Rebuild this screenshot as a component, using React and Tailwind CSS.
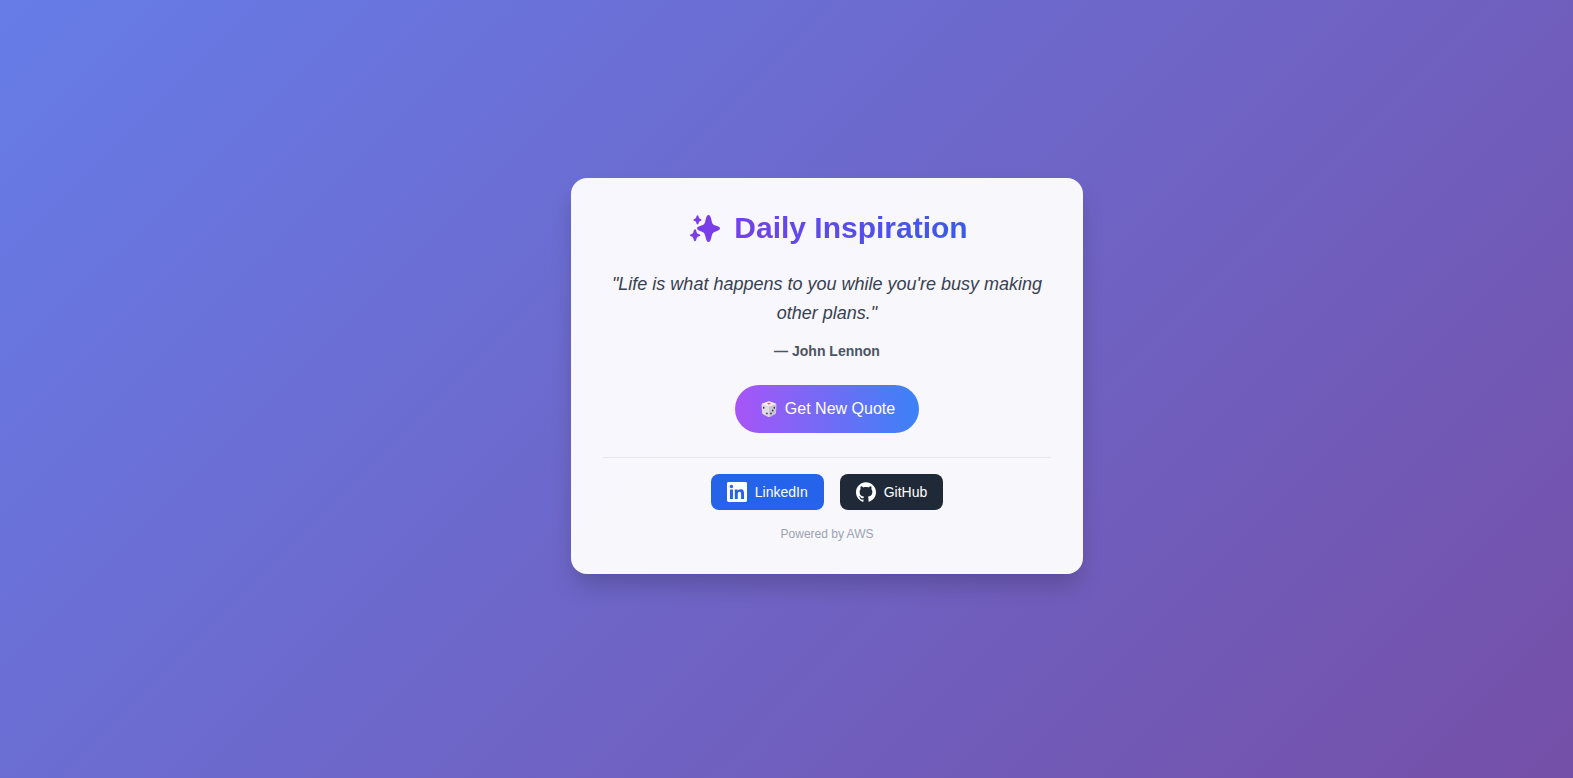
function SparklesIcon() {
  return (
    <svg viewBox="0 0 30 27" className="h-[27px] w-[30px] fill-[#7b3dea]" aria-hidden="true">
      <path d="M18.500 0C19.900 0 20.700 1.500 21.500 5.200c.8 3.600 1.300 4.300 4.200 5.400 2.900 1 4.300 1.600 4.300 2.900s-1.400 1.900-4.300 2.900c-2.900 1.100-3.400 1.800-4.200 5.400C20.700 25.500 19.900 27 18.500 27s-2.200-1.500-3-5.200c-.8-3.600-1.300-4.300-4.200-5.400C8.400 15.400 7 14.800 7 13.500s1.400-1.900 4.300-2.900c2.900-1.100 3.400-1.800 4.200-5.400C16.300 1.500 17.100 0 18.500 0Z" />
      <path d="M7.500.3c.7 0 1 .9 1.300 2 .3.900.5 1.200 1.300 1.500.8.300 1.300.5 1.300 1.100s-.5.800-1.300 1.100c-.8.300-1 .6-1.300 1.500-.3 1.100-.6 2-1.300 2s-1-.9-1.300-2c-.3-.9-.5-1.200-1.300-1.500-.8-.3-1.300-.5-1.300-1.100s.5-.8 1.300-1.100c.8-.3 1-.6 1.300-1.500.3-1.100.6-2 1.300-2Z" />
      <path d="M5 14.300c.9 0 1.200 1.200 1.600 2.700.4 1.200.7 1.600 1.800 2 1.100.4 1.900.6 1.900 1.300s-.8.900-1.900 1.300c-1.100.4-1.400.8-1.800 2-.4 1.500-.7 2.700-1.600 2.700s-1.200-1.200-1.600-2.700c-.4-1.200-.7-1.600-1.800-2C.8 21.200 0 21 0 20.300s.8-.9 1.600-1.300c1.100-.4 1.400-.8 1.800-2 .4-1.500.7-2.700 1.600-2.700Z" />
    </svg>
  );
}

function DiceIcon() {
  return (
    <svg viewBox="0 0 16 16" className="ml-0.5 size-4" aria-hidden="true">
      <path d="M7 .4a2.500 2.500 0 0 1 2 0l5.800 2.200c.4.200.5.600.2.900L8 6 1 3.500c-.3-.3-.2-.7.2-.9Z" fill="#f3eff3" />
      <path d="M.5 3.800c0-.5.300-.7.700-.6L8.100 5.700V16c-.4 0-.9-.1-1.300-.3L2 13.200c-.6-.3-.8-.6-.9-1.200Z" fill="#dedbe6" />
      <path d="M15.500 3.800c0-.5-.3-.7-.7-.6L8 5.700V16c.4 0 .9-.1 1.300-.3l4.800-2.500c.6-.3.800-.6.900-1.200Z" fill="#cac6d6" />
      <ellipse cx="8" cy="2.600" rx="1.700" ry=".9" fill="#e4636b" />
      <g fill="#33303f">
        <ellipse cx="2.700" cy="6.800" rx=".8" ry="1" />
        <ellipse cx="5.900" cy="12.600" rx=".8" ry="1" />
        <ellipse cx="13.300" cy="6.700" rx=".8" ry="1" />
        <ellipse cx="11.700" cy="9.600" rx=".8" ry="1" />
        <ellipse cx="10" cy="12.500" rx=".8" ry="1" />
      </g>
    </svg>
  );
}

function LinkedInIcon() {
  return (
    <svg viewBox="0 0 24 24" className="size-5 fill-current" aria-hidden="true">
      <path d="M20.447 20.452h-3.554v-5.569c0-1.328-.027-3.037-1.852-3.037-1.853 0-2.136 1.445-2.136 2.939v5.667H9.351V9h3.414v1.561h.046c.477-.9 1.637-1.850 3.370-1.850 3.601 0 4.267 2.370 4.267 5.455v6.286zM5.337 7.433c-1.144 0-2.063-.926-2.063-2.065 0-1.138.92-2.063 2.063-2.063 1.140 0 2.064.925 2.064 2.063 0 1.139-.925 2.065-2.064 2.065zm1.782 13.019H3.555V9h3.564v11.452zM22.225 0H1.771C.792 0 0 .774 0 1.729v20.542C0 23.227.792 24 1.771 24h20.451C23.200 24 24 23.227 24 22.271V1.729C24 .774 23.200 0 22.222 0h.003z" />
    </svg>
  );
}

function GitHubIcon() {
  return (
    <svg viewBox="0 0 24 24" className="size-5 fill-current" aria-hidden="true">
      <path d="M12 .297c-6.630 0-12 5.373-12 12 0 5.303 3.438 9.800 8.205 11.385.6.113.82-.258.82-.577 0-.285-.01-1.040-.015-2.040-3.338.724-4.042-1.610-4.042-1.610C4.422 18.070 3.633 17.700 3.633 17.700c-1.087-.744.084-.729.084-.729 1.205.084 1.838 1.236 1.838 1.236 1.070 1.835 2.809 1.305 3.495.998.108-.776.417-1.305.76-1.605-2.665-.3-5.466-1.332-5.466-5.930 0-1.310.465-2.380 1.235-3.220-.135-.303-.54-1.523.105-3.176 0 0 1.005-.322 3.300 1.230.96-.267 1.980-.399 3-.405 1.020.006 2.040.138 3 .405 2.280-1.552 3.285-1.230 3.285-1.230.645 1.653.24 2.873.12 3.176.765.840 1.230 1.910 1.230 3.220 0 4.610-2.805 5.625-5.475 5.920.42.360.81 1.096.81 2.220 0 1.606-.015 2.896-.015 3.286 0 .315.21.690.825.570C20.565 22.092 24 17.592 24 12.297c0-6.627-5.373-12-12-12" />
    </svg>
  );
}

export default function App() {
  return (
    <main className="flex min-h-screen items-center justify-center bg-[linear-gradient(135deg,#667eea_-4%,#764ba2_110%)] pb-[26px] pl-[81px] font-['Liberation_Sans',Arial,sans-serif]">
      <section className="w-full max-w-lg rounded-2xl bg-white/95 p-8 text-center shadow-[0_14px_25px_-4px_rgba(0,0,0,0.2)]">
        <h1 className="mb-6 flex items-center justify-center gap-3.5 bg-[linear-gradient(to_right,#9333ea,#2563eb)] bg-clip-text pl-1 text-3xl font-bold text-transparent">
          <SparklesIcon />
          Daily Inspiration
        </h1>

        <blockquote className="mb-[13px] text-lg leading-[29px] text-[#374151] italic">
          "Life is what happens to you while you're busy making other plans."
        </blockquote>
        <p className="mb-6 text-sm font-semibold text-[#4b5563]">— John Lennon</p>

        <button
          type="button"
          className="mb-6 inline-flex items-center gap-2 rounded-full bg-[linear-gradient(to_right,#a855f7,#3b82f6)] px-6 py-3 align-top text-base font-medium text-white"
        >
          <DiceIcon />
          Get New Quote
        </button>

        <footer className="border-t border-[#e5e7eb] pt-4">
          <nav className="flex justify-center gap-4">
            <a
              href="https://www.linkedin.com"
              className="flex items-center gap-2 rounded-lg bg-[#2563eb] px-4 py-2 text-sm font-medium text-white"
            >
              <LinkedInIcon />
              LinkedIn
            </a>
            <a
              href="https://github.com"
              className="flex items-center gap-2 rounded-lg bg-[#1f2937] px-4 py-2 text-sm font-medium text-white"
            >
              <GitHubIcon />
              GitHub
            </a>
          </nav>
          <p className="mt-4 text-xs text-[#9ca3af]">Powered by AWS</p>
        </footer>
      </section>
    </main>
  );
}
